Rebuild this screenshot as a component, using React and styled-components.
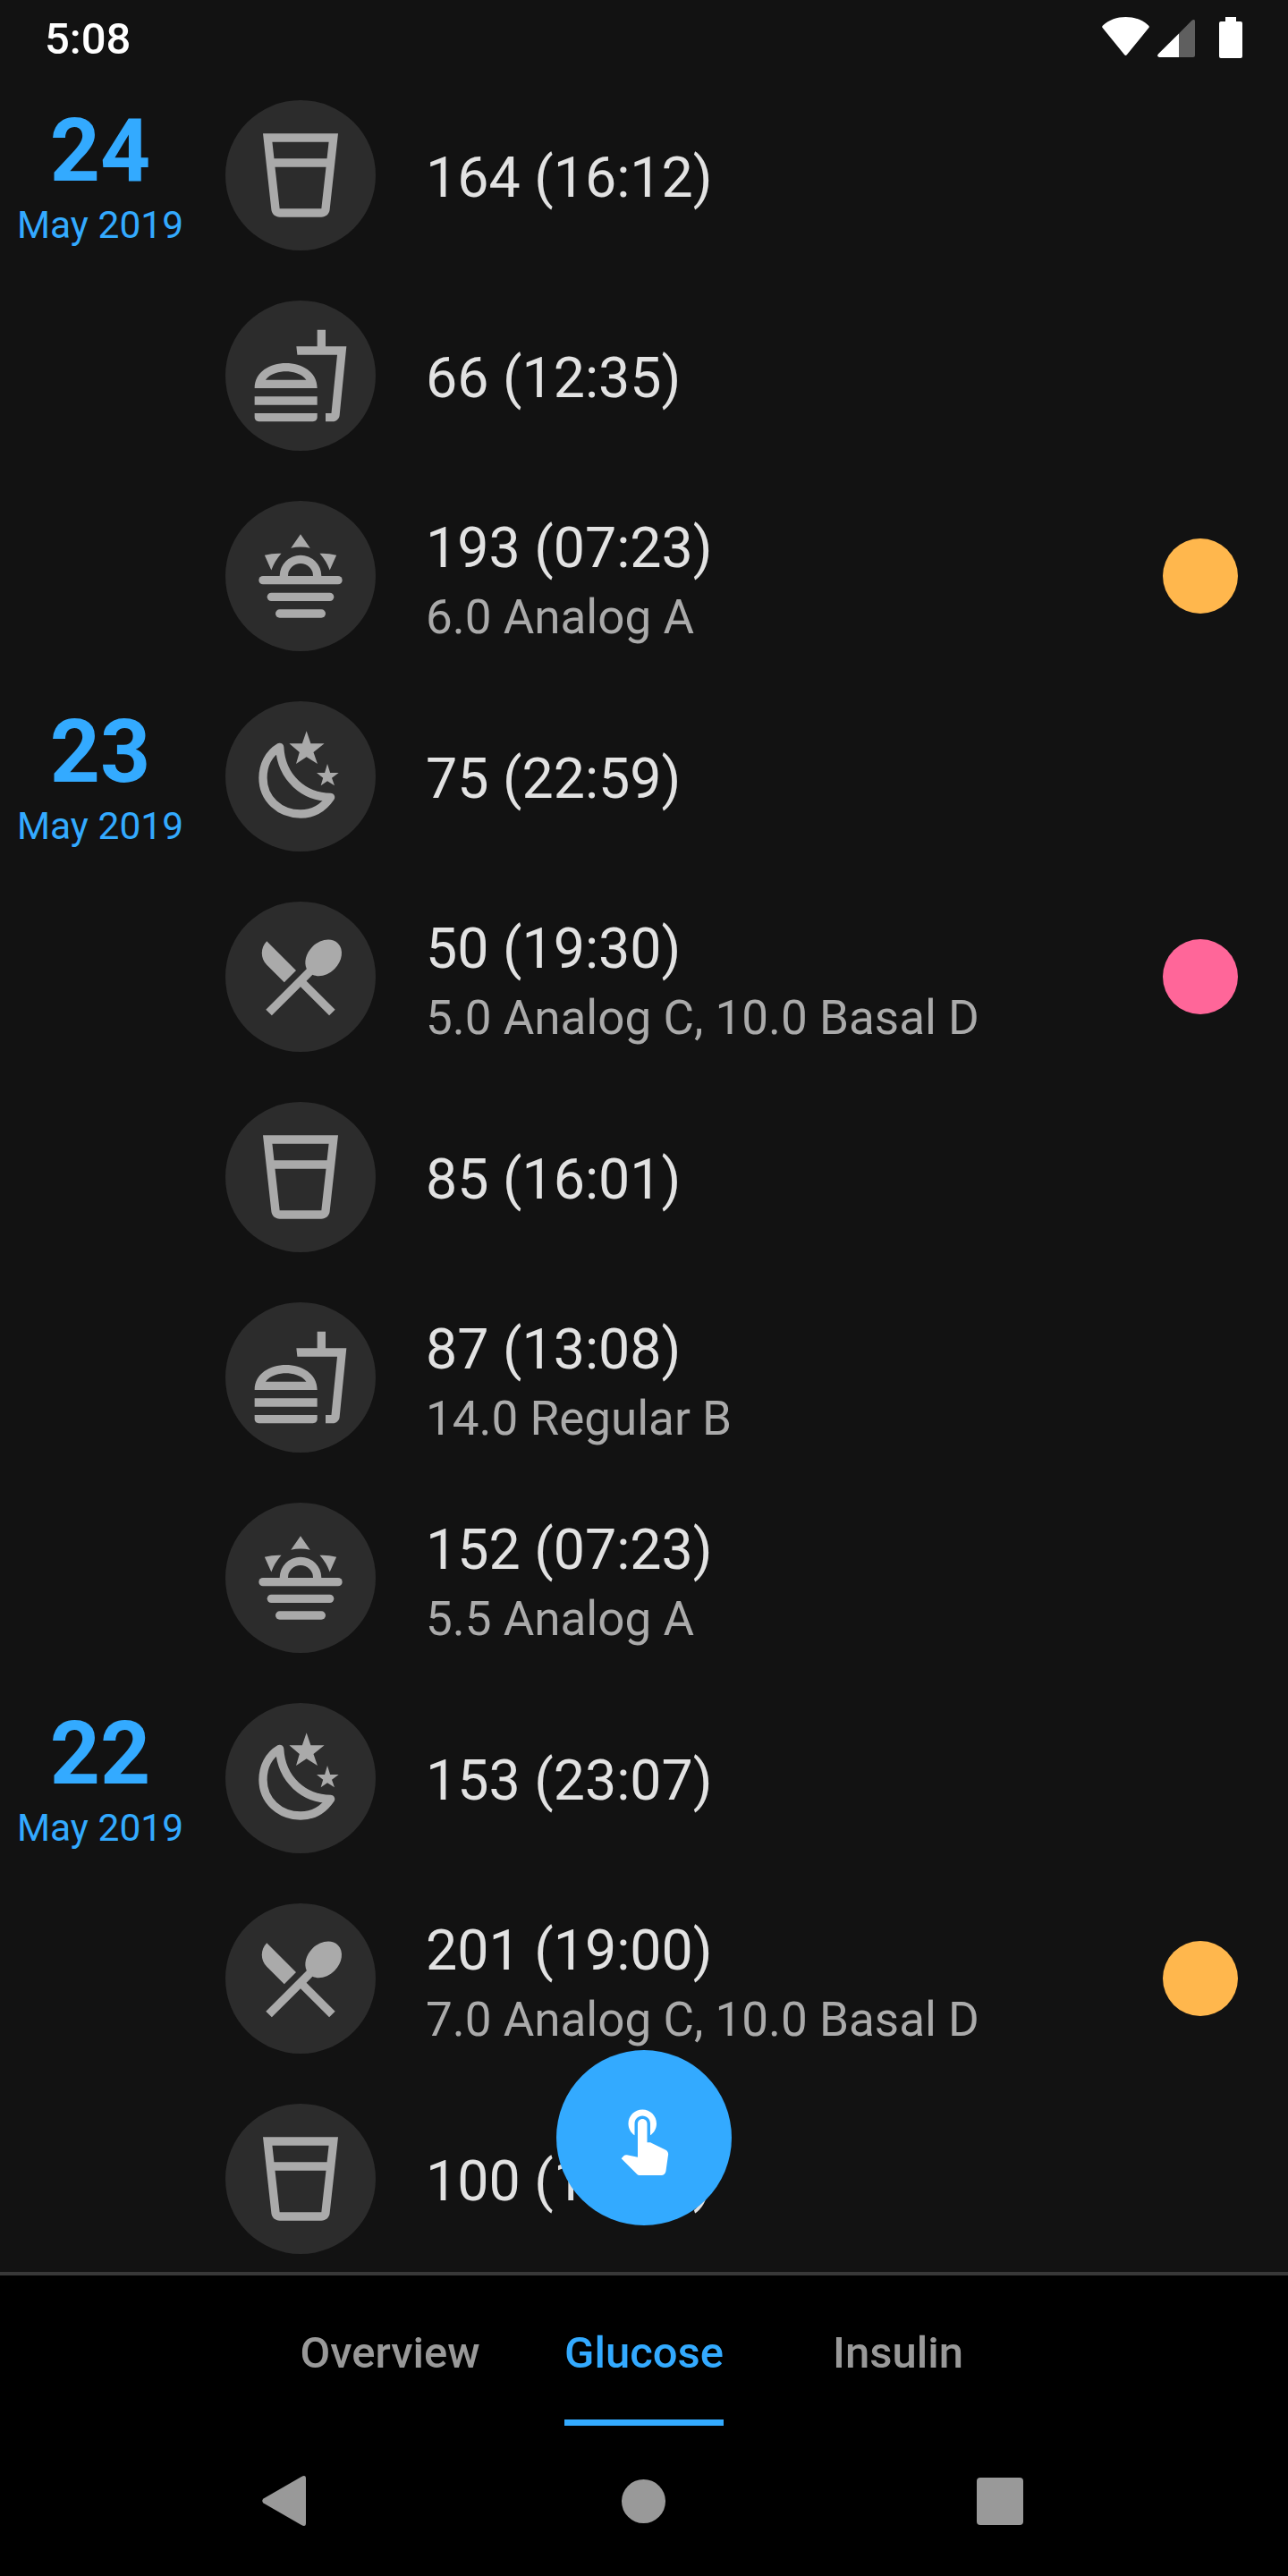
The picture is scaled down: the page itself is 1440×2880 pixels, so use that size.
import React from 'react'
import styled, { createGlobalStyle } from 'styled-components'

const GLASS = 'M3 2l2.01 18.23C5.13 21.23 5.97 22 7 22h10c1.03 0 1.87-.77 1.99-1.77L21 2H3zM5.23 4h13.54l-.44 4H5.67L5.23 4zM17 20H7L5.89 10h12.22L17 20z'
const FASTFOOD = 'M1 21.98c0 .56.45 1.01 1.01 1.01H15c.56 0 1.01-.45 1.01-1.01V21H1v.98zM8.5 8.99C4.75 8.99 1 11 1 15h15c0-4-3.75-6.01-7.5-6.01zM3.62 13c1.11-1.55 3.47-2.01 4.88-2.01s3.77.46 4.88 2.01H3.62zM1 17h15v2H1zM18 5V1h-2v4h-5l.23 2h9.56l-1.4 14H18v2h1.72c.84 0 1.53-.65 1.63-1.47L23 5h-5z'
const CUTLERY = 'M8.1 13.34l2.83-2.83L3.91 3.5c-1.56 1.56-1.56 4.09 0 5.66l4.19 4.18zm6.78-1.81c1.53.71 3.68.21 5.27-1.38 1.91-1.91 2.28-4.65.81-6.12-1.46-1.46-4.2-1.1-6.12.81-1.59 1.59-2.09 3.74-1.38 5.27L3.7 19.87l1.41 1.41L12 14.41l6.88 6.88 1.41-1.41L13.41 13l1.47-1.47z'
const TOUCH = 'M9 11.24V7.5C9 6.12 10.12 5 11.5 5S14 6.12 14 7.5v3.74c1.21-.81 2-2.18 2-3.74C16 5.01 13.99 3 11.5 3S7 5.01 7 7.5c0 1.56.79 2.93 2 3.74zm9.84 4.63l-4.54-2.26c-.17-.07-.35-.11-.54-.11H13v-6c0-.83-.67-1.5-1.5-1.5S10 6.67 10 7.5v10.74l-3.43-.72c-.08-.01-.15-.03-.24-.03-.31 0-.59.13-.79.33l-.79.8 4.94 4.94c.27.27.65.44 1.06.44h6.79c.75 0 1.33-.55 1.44-1.28l.75-5.27c.01-.07.02-.14.02-.2 0-.62-.38-1.16-.91-1.38z'

const GlobalStyle = createGlobalStyle`
  html, body {
    margin: 0;
    padding: 0;
    background: #121212;
  }
`

const Screen = styled.div`
  position: relative;
  display: flex;
  flex-direction: column;
  width: 1440px;
  height: 2880px;
  overflow: hidden;
  background: #121212;
  font-family: Roboto, "Liberation Sans", sans-serif;
`

const StatusBar = styled.div`
  display: flex;
  flex: 0 0 84px;
  align-items: flex-start;
  justify-content: space-between;
  padding: 0 51px 0 50px;
`

const Clock = styled.span`
  margin-top: 15px;
  font-size: 49px;
  line-height: 58px;
  font-weight: 500;
  color: #fff;
`

const StatusIcons = styled.div`
  display: flex;
  align-items: flex-start;
  margin-top: 19px;

  svg {
    display: block;
  }
`

const Signal = styled.svg`
  margin: 3px 27px 0 9px;
`

const List = styled.div`
  flex: 1;
  min-height: 0;
  overflow: hidden;
`

const Row = styled.div`
  display: grid;
  grid-template-columns: 224px 168px 1fr 84px;
  height: 224px;
  align-items: center;
  padding-right: 56px;
`

const DateCell = styled.div`
  display: flex;
  flex-direction: column;
  align-items: center;
  align-self: start;
  padding-top: 36px;
  color: #33aaff;
`

const Day = styled.div`
  font-size: 98px;
  line-height: 98px;
  font-weight: 700;
`

const Month = styled.div`
  margin-top: 13px;
  font-size: 42.5px;
  line-height: 42px;
`

const Badge = styled.div`
  display: flex;
  align-items: center;
  justify-content: center;
  width: 168px;
  height: 168px;
  margin-left: 28px;
  border-radius: 50%;
  background: #2c2c2c;
  color: #aaa;
`

const Body = styled.div`
  display: flex;
  flex-direction: column;
  padding: 6px 0 0 84px;
`

const Primary = styled.div`
  font-size: 62.7px;
  line-height: 74px;
  color: #e2e2e2;
`

const Secondary = styled.div`
  margin-top: 12px;
  font-size: 53px;
  line-height: 56px;
  color: #aaa;
`

const Dot = styled.div`
  width: 84px;
  height: 84px;
  border-radius: 50%;
  background: ${p => p.$color};
`

const Fab = styled.button`
  position: absolute;
  left: 622px;
  top: 2292px;
  display: flex;
  align-items: center;
  justify-content: center;
  width: 196px;
  height: 196px;
  padding: 0;
  border: 0;
  border-radius: 50%;
  background: #33aaff;
  color: #fff;
`

const Tabs = styled.div`
  display: grid;
  flex: 0 0 172px;
  box-sizing: border-box;
  grid-template-columns: repeat(3, 284px);
  justify-content: center;
  justify-items: center;
  border-top: 4px solid #383838;
  background: #000;
`

const Tab = styled.div`
  display: flex;
  align-items: center;
  height: 168px;
  box-sizing: border-box;
  padding-top: 11px;
  border-bottom: 7px solid ${p => (p.$active ? '#33aaff' : 'transparent')};
  font-size: 49px;
  font-weight: 500;
  color: ${p => (p.$active ? '#33aaff' : '#999')};
`

const NavBar = styled.div`
  display: flex;
  flex: 0 0 168px;
  align-items: center;
  padding-left: 293px;
  background: #000;
  color: #999;
`

const HomeKey = styled.div`
  width: 49px;
  height: 49px;
  margin: 0 348px 0 353px;
  border-radius: 50%;
  background: currentColor;
`

const RecentKey = styled.div`
  width: 52px;
  height: 53px;
  border-radius: 4px;
  background: currentColor;
`

function Glyph({ size = 112, children }) {
  return (
    <svg width={size} height={size} viewBox="0 0 24 24" fill="currentColor" fillRule="evenodd">
      {children}
    </svg>
  )
}

const Glass = () => <Glyph><path d={GLASS} /></Glyph>
const Burger = () => <Glyph><path d={FASTFOOD} /></Glyph>
const Cutlery = () => <Glyph><path d={CUTLERY} /></Glyph>

const Sunrise = () => (
  <Glyph>
    <path d="M12 2l2.3 3.3Q12 4.8 9.7 5.3z" />
    <path d="M3.4 7Q5.4 6.5 7.4 6.6Q5.8 8.4 5 10.6z" />
    <path d="M20.6 7Q18.6 6.5 16.6 6.6Q18.2 8.4 19 10.6z" />
    <path d="M7 12a5 5 0 0 1 10 0h-2a3 3 0 0 0-6 0z" />
    <rect x="2" y="12" width="20" height="2" rx="1" />
    <rect x="4" y="16" width="16" height="2" rx="1" />
    <rect x="6" y="20" width="12" height="2" rx="1" />
  </Glyph>
)

const Moon = () => (
  <Glyph>
    <path
      d="M7 5C4.3 6.6 3 9.4 3 12.4C3 17.4 7 21 12 21C15 21 17.5 19.5 19.2 17C13 17 7.4 12.5 7 5z"
      fill="none"
      stroke="currentColor"
      strokeWidth="2"
      strokeLinejoin="round"
    />
    <path d="M13.43 1.14L14.45 4.14H17.7L15.1 6.2L16.07 9L13.43 7.35L10.93 9L11.75 6.2L9.3 4.14H12.4z" />
    <path d="M18.43 9L19.1 11.14H21.14L19.5 12.4L20.14 14.2L18.43 13.1L16.86 14.2L17.4 12.4L15.86 11.14H17.8z" />
  </Glyph>
)

const ICONS = { glass: Glass, burger: Burger, sunrise: Sunrise, moon: Moon, cutlery: Cutlery }

const ORANGE = '#ffb74d'
const PINK = '#ff6699'

const rows = [
  { day: '24', icon: 'glass', text: '164 (16:12)' },
  { icon: 'burger', text: '66 (12:35)' },
  { icon: 'sunrise', text: '193 (07:23)', note: '6.0 Analog A', dot: ORANGE },
  { day: '23', icon: 'moon', text: '75 (22:59)' },
  { icon: 'cutlery', text: '50 (19:30)', note: '5.0 Analog C, 10.0 Basal D', dot: PINK },
  { icon: 'glass', text: '85 (16:01)' },
  { icon: 'burger', text: '87 (13:08)', note: '14.0 Regular B' },
  { icon: 'sunrise', text: '152 (07:23)', note: '5.5 Analog A' },
  { day: '22', icon: 'moon', text: '153 (23:07)' },
  { icon: 'cutlery', text: '201 (19:00)', note: '7.0 Analog C, 10.0 Basal D', dot: ORANGE },
  { icon: 'glass', text: '100 (16:10)' },
]

export default function App() {
  return (
    <Screen>
      <GlobalStyle />
      <StatusBar>
        <Clock>5:08</Clock>
        <StatusIcons>
          <svg width="53" height="43" viewBox="0 0 53 43" fill="#fff">
            <path d="M1 9.5C8 3 17 0 26.5 0S45 3 52 9.5Q53.4 10.7 52.4 12L27.8 42.3Q26.5 43.6 25.2 42.3L.6 12Q-.4 10.7 1 9.5z" />
          </svg>
          <Signal width="42" height="42" viewBox="0 0 42 42">
            <path d="M24 15.5L38.6.8Q42 -1.4 42 2V40Q42 42 40 42H24z" fill="#5f5f5f" />
            <path d="M24 15.5V42H2Q-.8 41 .8 38.6z" fill="#fff" />
          </Signal>
          <svg width="26" height="46" viewBox="0 0 26 46" fill="#fff">
            <path d="M7 0H19V5H24Q26 5 26 7V44Q26 46 24 46H2Q0 46 0 44V7Q0 5 2 5H7z" />
          </svg>
        </StatusIcons>
      </StatusBar>

      <List>
        {rows.map(row => {
          const Icon = ICONS[row.icon]
          return (
            <Row key={row.text}>
              <DateCell>
                {row.day && <Day>{row.day}</Day>}
                {row.day && <Month>May 2019</Month>}
              </DateCell>
              <Badge><Icon /></Badge>
              <Body>
                <Primary>{row.text}</Primary>
                {row.note && <Secondary>{row.note}</Secondary>}
              </Body>
              {row.dot ? <Dot $color={row.dot} /> : <span />}
            </Row>
          )
        })}
      </List>

      <Tabs>
        <div><Tab>Overview</Tab></div>
        <div><Tab $active>Glucose</Tab></div>
        <div><Tab>Insulin</Tab></div>
      </Tabs>

      <NavBar>
        <svg width="49" height="56" viewBox="0 0 49 56" fill="currentColor">
          <path d="M1.5 25.5L44 1Q49 -1.5 49 3V53Q49 57.5 44 55L1.5 30.5Q-1 28 1.5 25.5z" />
        </svg>
        <HomeKey />
        <RecentKey />
      </NavBar>

      <Fab aria-label="Add">
        <Glyph size={84}><path d={TOUCH} /></Glyph>
      </Fab>
    </Screen>
  )
}
